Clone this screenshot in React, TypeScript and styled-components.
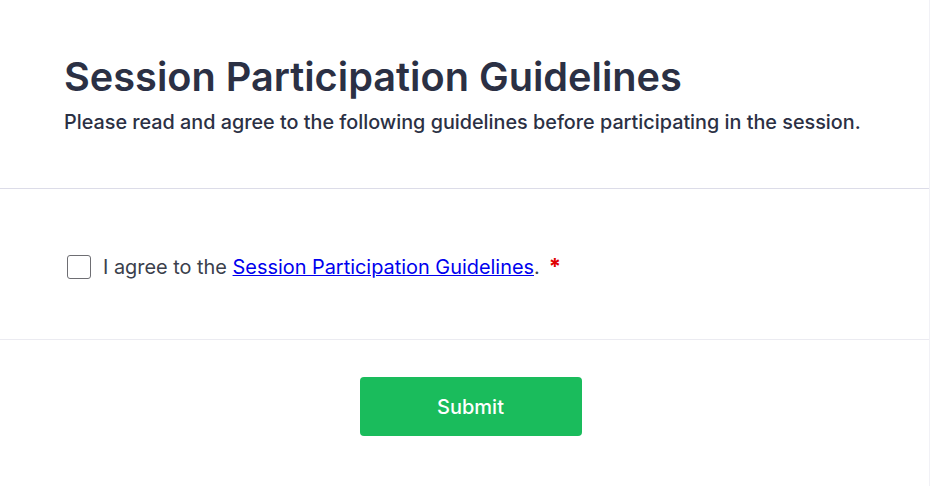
import React, { useState } from 'react'
import styled, { createGlobalStyle } from 'styled-components'

const GlobalStyle = createGlobalStyle`
  html, body {
    margin: 0;
    padding: 0;
    background: #ffffff;
  }
  body {
    font-family: Inter, "Noto Sans", sans-serif;
  }
`

const Card = styled.form`
  width: 930px;
  min-height: 486px;
  box-sizing: border-box;
  border-right: 1px solid #f1f1f6;
  background: #fff;
`

const Header = styled.header`
  padding: 53px 64px 0;
  height: 189px;
  box-sizing: border-box;
  border-bottom: 1px solid #dcdce8;
`

const Title = styled.h1`
  margin: 0;
  font-size: 39.7px;
  line-height: 48px;
  font-weight: 600;
  color: #2b3044;
`

const Subtitle = styled.p`
  margin: 7px 0 0;
  font-size: 19.8px;
  line-height: 28px;
  font-weight: 500;
  color: #2b3044;
`

const Body = styled.section`
  height: 151px;
  box-sizing: border-box;
  padding: 64px 64px 0 67px;
  border-bottom: 1px solid #ebebf1;
`

const AgreeRow = styled.label`
  display: flex;
  align-items: center;
  gap: 12px;
  font-size: 19.9px;
  line-height: 28px;
  color: #3b3f4c;
  cursor: pointer;
`

const Box = styled.span<{ $checked: boolean }>`
  width: 24px;
  height: 24px;
  box-sizing: border-box;
  border: 1.5px solid #6e6e73;
  border-radius: 3px;
  background: ${p => (p.$checked ? '#1abc5c' : '#fff')};
  flex-shrink: 0;
`

const HiddenInput = styled.input`
  display: none;
`

const GuideLink = styled.a`
  color: #0000ee;
  text-decoration: underline;
`

const Required = styled.span`
  color: #e00000;
  font-size: 22px;
  line-height: 1;
  font-weight: 700;
  margin-left: 9px;
`

const Footer = styled.footer`
  display: flex;
  justify-content: center;
  padding: 37px 0 0 12px;
`

const SubmitButton = styled.button`
  width: 222px;
  height: 59px;
  border: none;
  border-radius: 4px;
  background: #1abc5c;
  color: #fff;
  font-family: Inter, "Noto Sans", sans-serif;
  font-size: 20px;
  font-weight: 500;
  cursor: pointer;
`

export default function App () {
  const [agreed, setAgreed] = useState(false)

  return (
    <>
      <GlobalStyle />
      <Card onSubmit={e => e.preventDefault()}>
        <Header>
          <Title>Session Participation Guidelines</Title>
          <Subtitle>Please read and agree to the following guidelines before participating in the session.</Subtitle>
        </Header>
        <Body>
          <AgreeRow>
            <HiddenInput type="checkbox" checked={agreed} onChange={() => setAgreed(!agreed)} />
            <Box $checked={agreed} />
            <span>
              I agree to the <GuideLink href="#">Session Participation Guidelines</GuideLink>.
              <Required>*</Required>
            </span>
          </AgreeRow>
        </Body>
        <Footer>
          <SubmitButton type="submit">Submit</SubmitButton>
        </Footer>
      </Card>
    </>
  )
}
